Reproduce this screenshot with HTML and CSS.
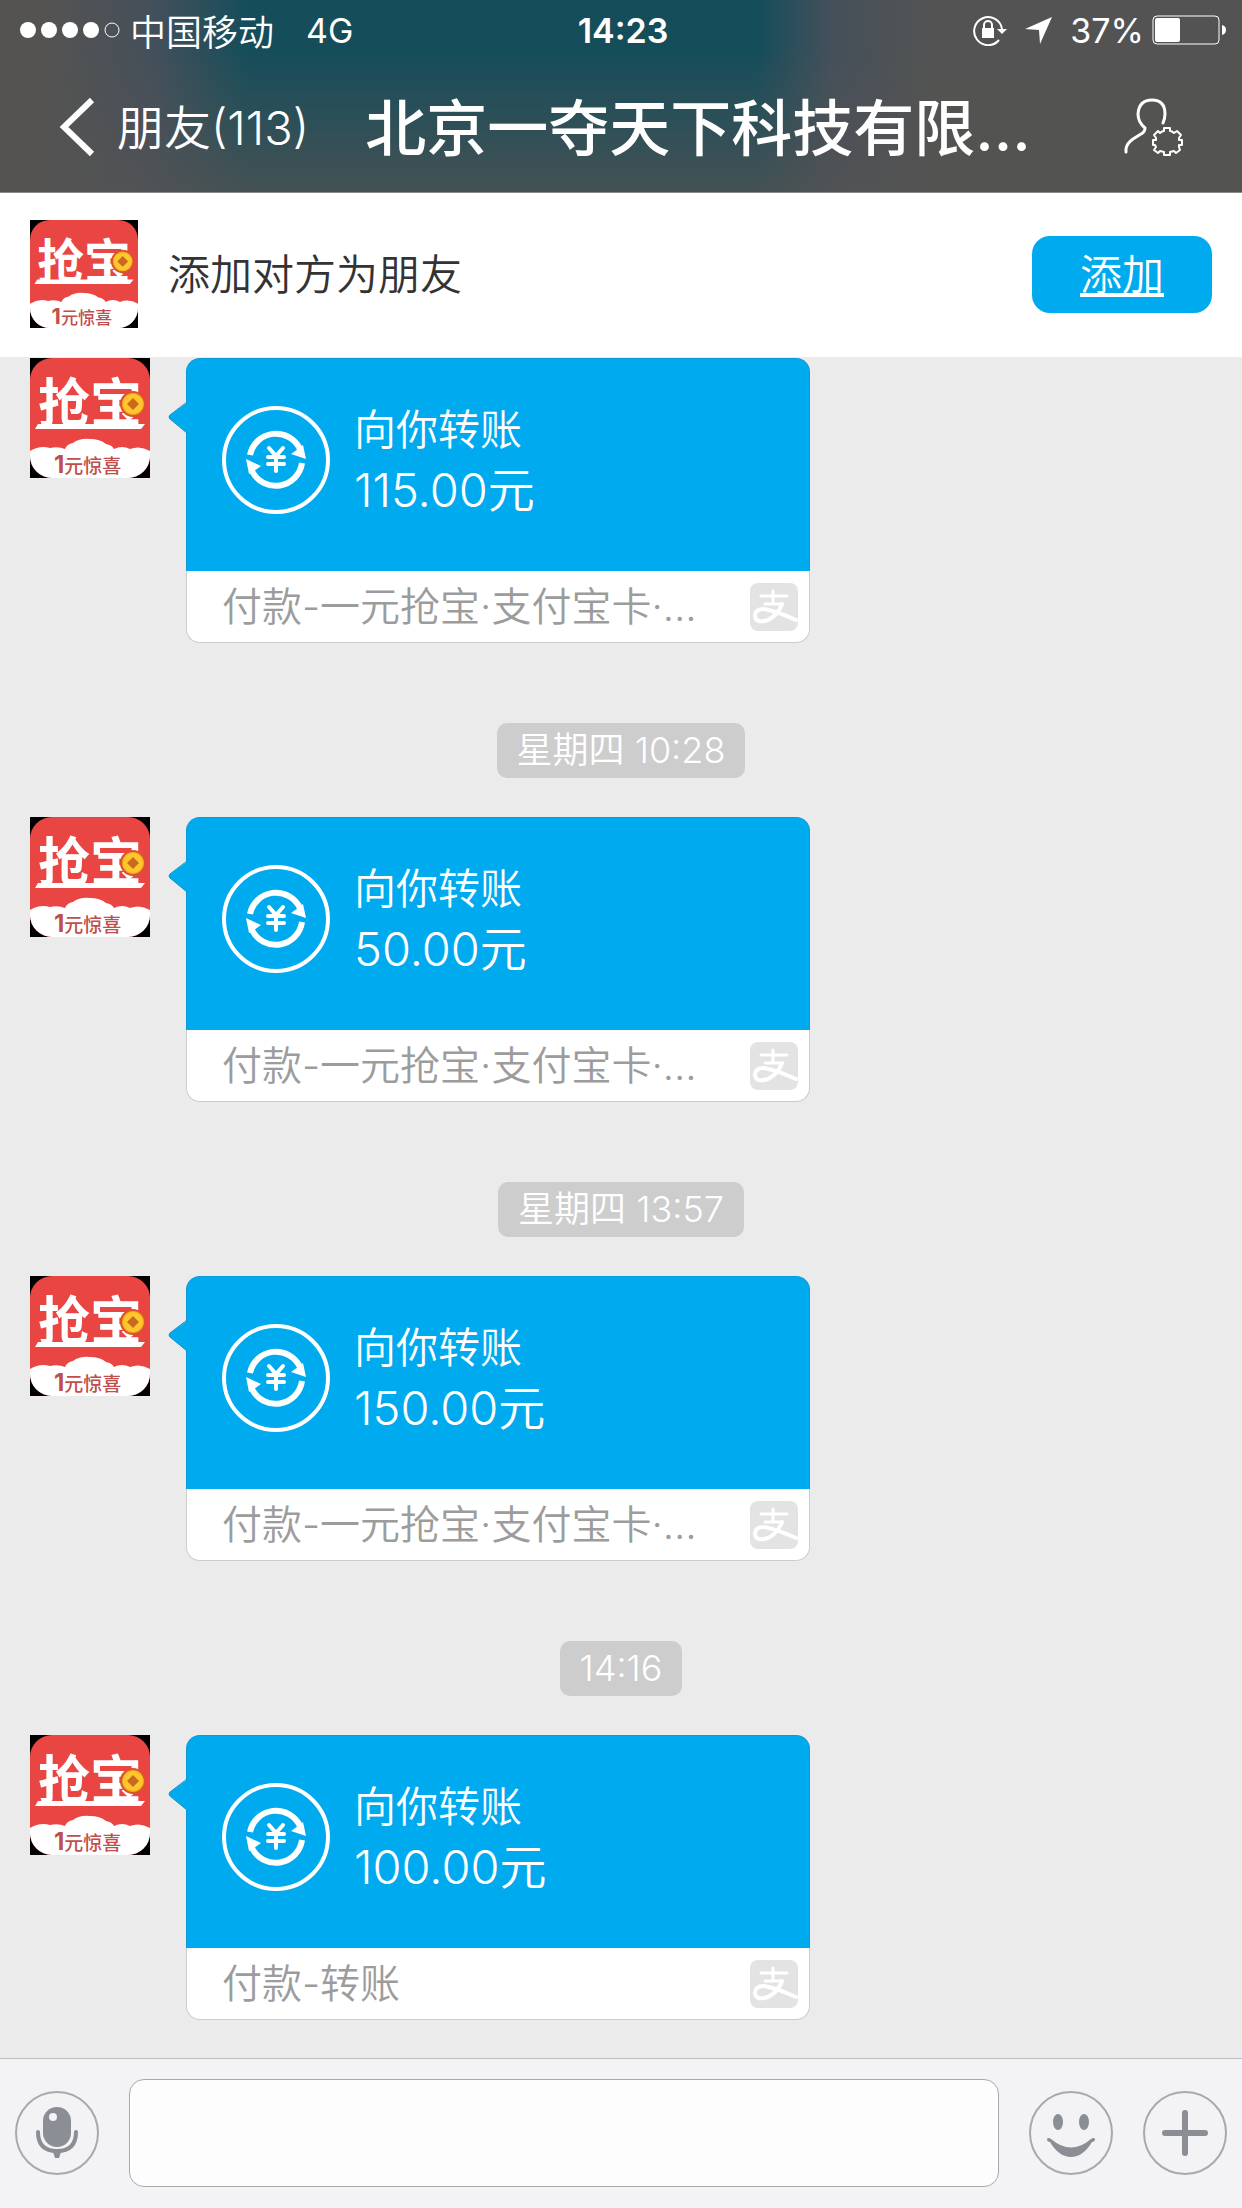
FILE: index.html
```html
<!DOCTYPE html>
<html lang="zh-CN">
<head>
<meta charset="utf-8">
<meta name="viewport" content="width=device-width, initial-scale=1">
<title>北京一夺天下科技有限公司</title>
<link rel="stylesheet" href="styles.css">
</head>
<body>
<svg class="defs" aria-hidden="true">
  <symbol id="transfer" viewBox="0 0 108 108">
    <circle cx="54" cy="54" r="52" fill="none" stroke="#fff" stroke-width="4"/>
    <g fill="none" stroke="#fff" stroke-width="6">
      <path d="M28 49A26.500 26.500 0 0 1 78 43"/>
      <path d="M80 57A26.500 26.500 0 0 1 30 65"/>
    </g>
    <path d="M81 39L84 53L69 48L76 43ZM27 68L24 53L39 60L32 65Z" fill="#fff"/>
    <path d="M47 42L54 50L61 42M54 50V65M46 51H62M46 58H62" fill="none" stroke="#fff" stroke-width="4" stroke-linecap="round"/>
  </symbol>
  <symbol id="alipay" viewBox="0 0 48 48">
    <rect width="48" height="48" rx="8" fill="#e3e3e3"/>
    <g fill="none" stroke="#fff" stroke-linecap="round">
      <path d="M23 8V20M11 13H37M15 21H32" stroke-width="3"/>
      <path d="M32 21Q28 32 18 37Q6 41 5 33Q5 26 14 26Q26 28 46 37" stroke-width="4"/>
    </g>
  </symbol>
  <symbol id="tail" viewBox="0 0 20 34">
    <path d="M20 1L2 14Q0 16 2 18L20 33Z" fill="#00aaef"/>
    <path d="M19 1L2 14Q0 16 2 18L19 32" fill="none" stroke="#1493c8"/>
  </symbol>
</svg>

<header class="top">
  <div class="status">
    <div class="status-left">
      <svg width="102" height="18" viewBox="0 0 102 18" aria-hidden="true">
        <g fill="#fff"><circle cx="8" cy="9" r="8"/><circle cx="29" cy="9" r="8"/><circle cx="50" cy="9" r="8"/><circle cx="71" cy="9" r="8"/></g>
        <circle cx="92" cy="9" r="7" fill="none" stroke="#fff"/>
      </svg>
      <span class="carrier">中国移动</span>
      <span>4G</span>
    </div>
    <time class="clock">14:23</time>
    <div class="status-right">
      <svg width="34" height="32" viewBox="0 0 34 32" aria-hidden="true">
        <path d="M26 26A14 14 0 1 1 29 15" fill="none" stroke="#fff" stroke-width="2"/>
        <path d="M24 15H34L29 20Z" fill="#fff"/>
        <rect x="9" y="14" width="12" height="10" fill="#fff"/>
        <path d="M11 14V11A4 4 0 0 1 19 11V14" fill="none" stroke="#fff" stroke-width="2"/>
      </svg>
      <svg class="locate" width="27" height="27" viewBox="0 0 27 27" aria-hidden="true"><path d="M27 0L15 27L14 13L0 12Z" fill="#fff"/></svg>
      <span>37%</span>
      <svg class="battery" width="74" height="30" viewBox="0 0 74 30" aria-hidden="true">
        <rect x="1" y="1" width="66" height="28" rx="4" fill="none" stroke="#fff"/>
        <rect x="3" y="3" width="25" height="24" rx="2" fill="#fff"/>
        <path d="M70 10Q74 11 74 15Q74 19 70 20Z" fill="#fff"/>
      </svg>
    </div>
  </div>
  <nav class="nav">
    <a class="back" href="#">
      <svg width="36" height="60" viewBox="0 0 36 60" aria-hidden="true"><path d="M33 3L5 30L33 57" fill="none" stroke="#fff" stroke-width="6"/></svg>
      <span class="back-text">朋友(113)</span>
    </a>
    <h1 class="title">北京一夺天下科技有限…</h1>
    <button class="profile" type="button" aria-label="好友设置">
      <svg width="60" height="60" viewBox="0 0 60 60" aria-hidden="true">
        <g fill="none" stroke="#fff" stroke-linecap="round" stroke-linejoin="round">
          <path d="M3 55V52Q4 46 10 42L18 37Q22 35 22 31Q15 25 15 17Q16 3 29 3Q42 3 42 17Q42 21 40 26" stroke-width="3"/>
          <path d="M41 31H47V34Q49 34 51 36L54 34L58 38L56 41V43H59V48H56V50L57 53L53 56L51 54L47 55V58H41V55L37 54L35 56L31 53L33 50L32 48H30V43H33V41L31 38L35 34L37 36Q39 34 41 34Z" stroke-width="2"/>
        </g>
      </svg>
    </button>
  </nav>
</header>

<section class="friend">
  <svg class="friend-avatar" viewBox="0 0 120 120" aria-hidden="true">
    <g id="avatar">
      <rect width="120" height="120" fill="#000"/>
      <rect width="120" height="120" rx="22" fill="#e94543"/>
      <path d="M0 93Q10 87 20 90Q28 88 35 91Q37 86 43 85Q50 80 60 81Q70 81 76 86Q82 87 84 91Q92 87 100 91Q110 87 120 93V98A22 22 0 0 1 98 120H22A22 22 0 0 1 0 98Z" fill="#fff"/>
      <path d="M8 66H115L111 71H5Z" fill="#fff"/>
      <text class="avatar-name" x="8" y="64">抢宝</text>
      <text class="avatar-tag" x="24" y="115"><tspan class="avatar-one">1</tspan>元惊喜</text>
      <circle cx="103" cy="46" r="12" fill="#f9a51c" stroke="#d9532f" stroke-width="2"/>
      <circle cx="103" cy="46" r="10" fill="#ffc72e"/>
      <path d="M103 40L109 46L103 52L97 46Z" fill="#c96a1c"/>
    </g>
  </svg>
  <p class="friend-text">添加对方为朋友</p>
  <button class="add" type="button">添加</button>
</section>

<main class="chat">
  <article class="message">
    <svg class="avatar" viewBox="0 0 120 120" aria-hidden="true"><use href="#avatar"/></svg>
    <a class="bubble" href="#">
      <svg class="tail" aria-hidden="true"><use href="#tail"/></svg>
      <div class="transfer">
        <svg class="transfer-icon" aria-hidden="true"><use href="#transfer"/></svg>
        <div><p class="label">向你转账</p><p class="amount">115.00元</p></div>
      </div>
      <div class="note"><span class="note-text">付款-一元抢宝·支付宝卡·…</span><svg class="alipay" aria-hidden="true"><use href="#alipay"/></svg></div>
    </a>
  </article>
  <time class="stamp">星期四 10:28</time>
  <article class="message">
    <svg class="avatar" viewBox="0 0 120 120" aria-hidden="true"><use href="#avatar"/></svg>
    <a class="bubble" href="#">
      <svg class="tail" aria-hidden="true"><use href="#tail"/></svg>
      <div class="transfer">
        <svg class="transfer-icon" aria-hidden="true"><use href="#transfer"/></svg>
        <div><p class="label">向你转账</p><p class="amount">50.00元</p></div>
      </div>
      <div class="note"><span class="note-text">付款-一元抢宝·支付宝卡·…</span><svg class="alipay" aria-hidden="true"><use href="#alipay"/></svg></div>
    </a>
  </article>
  <time class="stamp">星期四 13:57</time>
  <article class="message">
    <svg class="avatar" viewBox="0 0 120 120" aria-hidden="true"><use href="#avatar"/></svg>
    <a class="bubble" href="#">
      <svg class="tail" aria-hidden="true"><use href="#tail"/></svg>
      <div class="transfer">
        <svg class="transfer-icon" aria-hidden="true"><use href="#transfer"/></svg>
        <div><p class="label">向你转账</p><p class="amount">150.00元</p></div>
      </div>
      <div class="note"><span class="note-text">付款-一元抢宝·支付宝卡·…</span><svg class="alipay" aria-hidden="true"><use href="#alipay"/></svg></div>
    </a>
  </article>
  <time class="stamp">14:16</time>
  <article class="message">
    <svg class="avatar" viewBox="0 0 120 120" aria-hidden="true"><use href="#avatar"/></svg>
    <a class="bubble" href="#">
      <svg class="tail" aria-hidden="true"><use href="#tail"/></svg>
      <div class="transfer">
        <svg class="transfer-icon" aria-hidden="true"><use href="#transfer"/></svg>
        <div><p class="label">向你转账</p><p class="amount">100.00元</p></div>
      </div>
      <div class="note"><span class="note-text">付款-转账</span><svg class="alipay" aria-hidden="true"><use href="#alipay"/></svg></div>
    </a>
  </article>
</main>

<form class="composer">
  <button class="round" type="button" aria-label="语音">
    <svg viewBox="2 2 80 80" aria-hidden="true">
      <rect x="28" y="16" width="28" height="40" rx="14" fill="#8b8e94"/>
      <circle cx="38" cy="26" r="4" fill="#f3f4f6"/>
      <path d="M23 41Q23 60 42 60Q61 60 61 41" fill="none" stroke="#8b8e94" stroke-width="4" stroke-linecap="round"/>
      <path d="M38 61H46L44 67H40Z" fill="#8b8e94"/>
    </svg>
  </button>
  <input class="field" type="text" aria-label="消息">
  <button class="round" type="button" aria-label="表情">
    <svg viewBox="2 2 80 80" aria-hidden="true">
      <g fill="#8b8e94">
        <ellipse cx="29" cy="31" rx="5" ry="8"/><ellipse cx="55" cy="31" rx="5" ry="8"/>
        <path d="M18 48Q19 46 22 48Q42 65 62 48Q65 46 66 48Q66 51 63 51Q54 66 42 66Q30 66 21 51Q18 51 18 48Z"/>
      </g>
    </svg>
  </button>
  <button class="round" type="button" aria-label="更多">
    <svg viewBox="2 2 80 80" aria-hidden="true"><path d="M42 22V62M22 42H62" stroke="#8b8e94" stroke-width="6" stroke-linecap="round"/></svg>
  </button>
</form>
</body>
</html>
```
FILE: styles.css
```css
* {
  box-sizing: border-box;
}

body {
  margin: 0;
  min-height: 100vh;
  display: flex;
  flex-direction: column;
  background: #ebebeb;
  color: #333;
  font-family: Inter, "Noto Sans CJK SC", sans-serif;
  font-weight: 350;
}

p,
h1 {
  margin: 0;
}

svg {
  display: block;
  flex: none;
}

a {
  color: inherit;
  text-decoration: none;
}

button {
  padding: 0;
  border: 0;
  background: none;
  color: inherit;
  font: inherit;
}

.defs {
  position: absolute;
  width: 0;
  height: 0;
}

.avatar-name {
  fill: #fff;
  font-size: 52px;
  font-weight: 700;
}

.avatar-tag {
  fill: #bf4e4c;
  font-size: 19px;
  font-weight: 500;
}

.avatar-one {
  font-size: 24px;
  font-weight: 700;
}

/* Header */
.top {
  color: #fff;
  border-bottom: 1px solid #8c8989;
  background:
    linear-gradient(180deg, rgba(84, 83, 82, 0) 25%, rgba(84, 83, 82, 0.75) 100%),
    linear-gradient(90deg, #545352 4%, #45505a 12%, #154d5b 20%, #154d5b 61%, #45505a 67%, #535353 75%);
}

.status {
  display: grid;
  grid-template-columns: 1fr auto 1fr;
  align-items: center;
  height: 62px;
  padding: 0 16px 2px 20px;
  font-size: 34px;
  font-weight: 400;
}

.status-left,
.status-right {
  display: flex;
  align-items: center;
}

.status-left {
  gap: 8px;
}

.status-right {
  justify-content: flex-end;
}

.carrier {
  margin-right: 24px;
  font-size: 36px;
  font-weight: 350;
}

.clock {
  font-weight: 600;
}

.locate {
  margin: 0 18px;
}

.battery {
  margin-left: 8px;
}

.nav {
  display: flex;
  align-items: center;
  height: 130px;
  padding: 0 59px;
}

.back {
  display: flex;
  align-items: center;
  gap: 22px;
  font-size: 47px;
}

.back-text,
.title,
.friend-text,
.add,
.note-text {
  padding-bottom: 5px;
}

.title {
  flex: 1;
  min-width: 0;
  margin: 0 48px 0 56px;
  overflow: hidden;
  white-space: nowrap;
  font-size: 61px;
  font-weight: 500;
}

/* Add-friend bar */
.friend {
  display: flex;
  align-items: center;
  gap: 30px;
  height: 164px;
  padding: 0 30px 2px;
  background: #fff;
}

.friend-avatar {
  width: 108px;
  height: 108px;
}

.friend-text {
  flex: 1;
  font-size: 42px;
}

.add {
  width: 180px;
  height: 77px;
  border-radius: 18px;
  background: #00aaef;
  color: #fff;
  font-size: 42px;
  text-decoration: underline;
}

/* Conversation */
.chat {
  flex: 1;
  display: flex;
  flex-direction: column;
  padding: 1px 30px 38px;
}

.message {
  display: flex;
  gap: 36px;
}

.avatar {
  width: 120px;
  height: 120px;
}

.bubble {
  position: relative;
  width: 624px;
}

.tail {
  position: absolute;
  top: 43px;
  left: -18px;
  width: 20px;
  height: 34px;
}

.transfer {
  display: flex;
  align-items: center;
  gap: 24px;
  height: 213px;
  padding: 0 35px 10px;
  border: 1px solid #0c9bd6;
  border-bottom: 0;
  border-radius: 14px 14px 0 0;
  background: #00aaef;
  color: #fff;
}

.transfer-icon {
  width: 108px;
  height: 108px;
}

.label {
  font-size: 42px;
  line-height: 60px;
}

.amount {
  font-size: 47px;
  line-height: 60px;
}

.note {
  display: flex;
  align-items: center;
  justify-content: space-between;
  height: 72px;
  padding: 0 11px 0 35px;
  border: 1px solid #ccc;
  border-top: 0;
  border-radius: 0 0 14px 14px;
  background: #fff;
  color: #9c9c9c;
  font-size: 40px;
}

.alipay {
  width: 48px;
  height: 48px;
}

.stamp {
  align-self: center;
  margin: 80px 0 39px;
  padding: 0 20px;
  border-radius: 10px;
  background: #cdcdcd;
  color: #fff;
  font-size: 36px;
  line-height: 55px;
}

/* Composer */
.composer {
  display: flex;
  align-items: center;
  gap: 30px;
  height: 150px;
  padding: 0 15px 2px;
  border-top: 1px solid #bfc0c4;
  background: #f3f3f6;
}

.round {
  flex: none;
  width: 84px;
  height: 84px;
  border: 2px solid #a9a9ab;
  border-radius: 50%;
}

.round svg {
  width: 100%;
  height: 100%;
}

.field {
  flex: 1;
  min-width: 0;
  height: 108px;
  padding: 0 20px;
  border: 1px solid #a9a9ab;
  border-radius: 15px;
  background: #fdfdfd;
  font: inherit;
  font-size: 42px;
}
```
